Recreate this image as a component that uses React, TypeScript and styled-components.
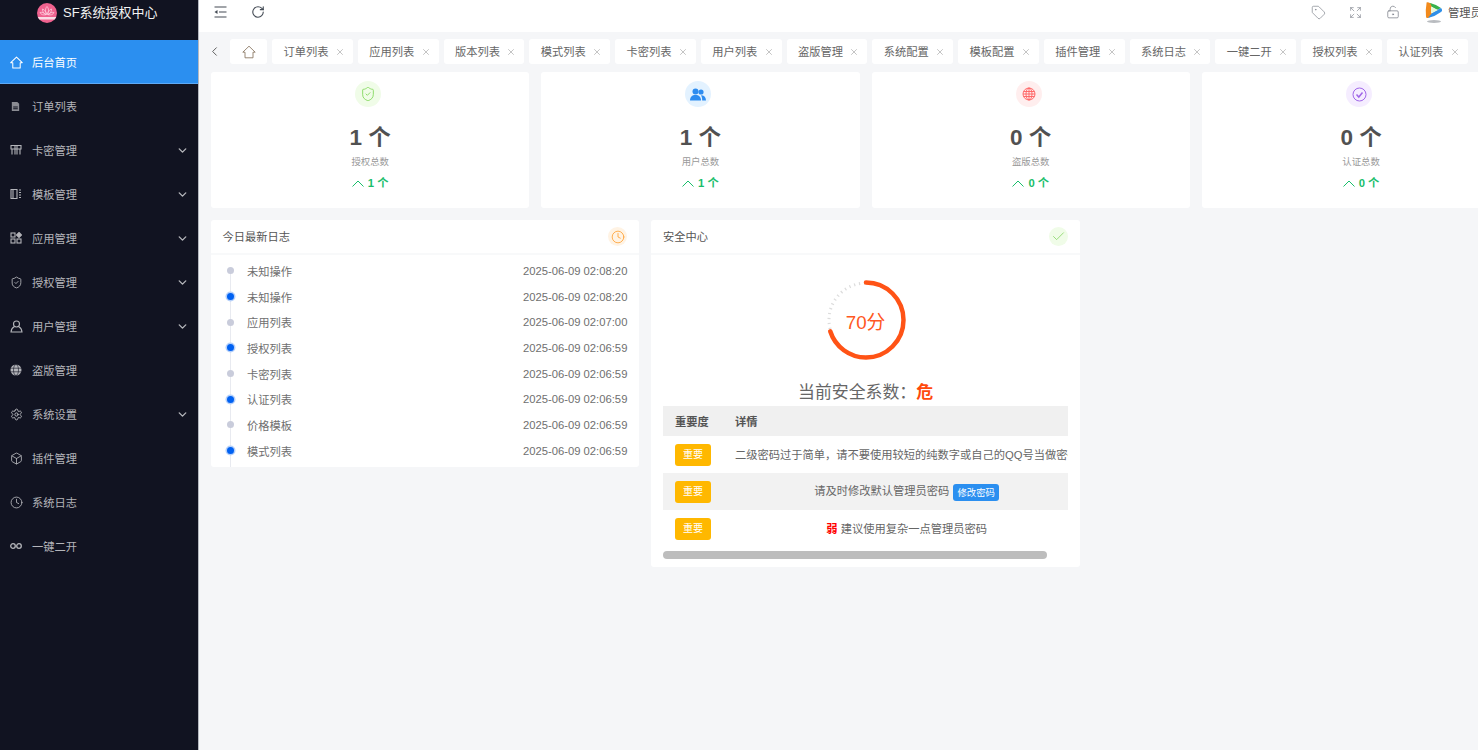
import React from 'react';
import styled, { createGlobalStyle } from 'styled-components';
import {
  Box, Check, ChevronDown, ChevronLeft, Clock, Expand, LockKeyholeOpen, RotateCw, Settings, ShieldCheck, Tag, X,
} from 'lucide-react';

const GlobalStyle = createGlobalStyle`
  html, body {
    margin: 0;
    height: 100%;
    overflow: hidden;
    background: #f5f6f8;
    font-family: "Liberation Sans", "Noto Sans CJK SC", sans-serif;
  }
`;

const HomeIcon = ({ size = 13, sw = 1.1 }: { size?: number; sw?: number }) => (
  <svg width={size} height={size} viewBox="0 0 14 14" fill="none" stroke="currentColor" strokeWidth={sw}>
    <path d="M.8 7.200 7 1.200l6.200 6H11v5.600H3V7.200z" strokeLinejoin="round" />
  </svg>
);
const OrderIcon = () => (
  <svg width="11" height="11" viewBox="0 0 12 12" fill="currentColor">
    <path d="M2 1h6l2 2v8H2z" opacity=".75" />
    <path d="M3.500 6h5v1h-5zM3.500 8h5v1h-5z" fill="#111321" />
  </svg>
);
const CardIcon = () => (
  <svg width="12" height="12" viewBox="0 0 12 12" fill="none" stroke="currentColor" strokeWidth="1.100">
    <path d="M1 1.500h10v3.500H1zM2 5v5.500M5 5v5.500M7 5v5.500M10 5v5.500M5 1.500V5M7 1.500V5" />
  </svg>
);
const TemplateIcon = () => (
  <svg width="12" height="12" viewBox="0 0 12 12" fill="none" stroke="currentColor" strokeWidth="1.100">
    <path d="M1 1.500h6v9H1zM3 1.500v9M9 2h2M9 4.500h2M9 7h2M9 9.500h2" />
  </svg>
);
const AppsIcon = () => (
  <svg width="12" height="12" viewBox="0 0 12 12" fill="none" stroke="currentColor" strokeWidth="1.100">
    <rect x="1" y="1" width="4" height="4" />
    <rect x="1" y="7" width="4" height="4" />
    <rect x="7" y="7" width="4" height="4" />
    <path d="M9 .5l2.500 2.500L9 5.500 6.500 3z" fill="currentColor" />
  </svg>
);
const PersonIcon = () => (
  <svg width="13" height="13" viewBox="0 0 13 13" fill="none" stroke="currentColor" strokeWidth="1.100">
    <circle cx="6.500" cy="4" r="3" />
    <path d="M4.500 6.500C2.500 7.500 1.200 9.500 1 12h11c-.2-2.500-1.500-4.500-3.500-5.500" />
  </svg>
);
const FilledGlobe = () => (
  <svg width="12" height="12" viewBox="0 0 12 12">
    <circle cx="6" cy="6" r="5.500" fill="currentColor" />
    <path d="M.5 4.200h11M.5 7.800h11" stroke="#111321" strokeWidth=".6" />
    <ellipse cx="6" cy="6" rx="2.500" ry="5.500" fill="none" stroke="#111321" strokeWidth=".6" />
  </svg>
);
const LoopIcon = () => (
  <svg width="12" height="8" viewBox="0 0 12 8" fill="none" stroke="currentColor" strokeWidth="1.300">
    <circle cx="3" cy="4" r="2.300" />
    <circle cx="9" cy="4" r="2.300" />
  </svg>
);
const MenuFold = () => (
  <svg width="13" height="12" viewBox="0 0 13 12" fill="none" stroke="currentColor" strokeWidth="1.200">
    <path d="M.5 1h12M.5 11h12M5 6h7.500" />
    <path d="M.5 6 3.500 4v4z" fill="currentColor" stroke="none" />
  </svg>
);
const ArrowUp = () => (
  <svg width="12" height="7" viewBox="0 0 12 7" fill="none" stroke="currentColor" strokeWidth="1">
    <path d="M.5 6.500 6 1l5.500 5.500" />
  </svg>
);
const ShieldBadge = () => <ShieldCheck size={16} strokeWidth={1.3} />;
const UsersBadge = () => (
  <svg width="16" height="13" viewBox="0 0 16 13" fill="currentColor">
    <circle cx="5.500" cy="3.500" r="3" />
    <path d="M0 12.500c0-3.500 2-5.500 5.500-5.500S11 9 11 12.500z" />
    <circle cx="11" cy="4" r="2.600" />
    <path d="M11.800 7.200c2.600.3 4 2 4.200 5.300h-3.800c0-2-.2-3.800-1.200-5z" />
  </svg>
);
const GlobeBadge = () => (
  <svg width="14" height="14" viewBox="0 0 14 14" fill="none" stroke="currentColor" strokeWidth=".9">
    <circle cx="7" cy="7" r="6" />
    <ellipse cx="7" cy="7" rx="3" ry="6" />
    <path d="M7 1v12M1.500 4.500h11M1 7h12M1.500 9.500h11" />
  </svg>
);
const CheckBadge = () => (
  <svg width="15" height="15" viewBox="0 0 15 15" fill="none" stroke="currentColor">
    <circle cx="7.500" cy="7.500" r="6.500" strokeWidth="1" />
    <path d="M4.500 7.500 6.800 10l3.700-4.500" strokeWidth="1.500" />
  </svg>
);
const HeadClock = () => <Clock size={14} strokeWidth={1.4} />;

const LotusLogo = () => (
  <svg width="20" height="20" viewBox="0 0 20 20">
    <circle cx="10" cy="10" r="10" fill="#f0628f" />
    <path d="M.8 14h18.400a10 10 0 0 1-1.500 2.500H2.300A10 10 0 0 1 .8 14z" fill="#fbdbe5" />
    <path d="M10 3.500c1.800 2 2.200 4.500 0 8-2.200-3.500-1.800-6 0-8zM5.500 6c2 .5 3.200 2.500 4 5.500-2.800-.5-4-2.500-4-5.500zM14.500 6c-2 .5-3.200 2.500-4 5.500 2.800-.5 4-2.500 4-5.500zM3 9.500c2-.5 4 .2 6 2.200-3 .6-5 0-6-2.200zM17 9.500c-2-.5-4 .2-6 2.200 3 .6 5 0 6-2.200z" fill="none" stroke="#ffd9e5" strokeWidth=".7" />
  </svg>
);

const PlayLogo = () => (
  <svg width="18" height="23" viewBox="0 0 18 23">
    <path d="M1.500 2.500Q1 1 3 1.200L7 3v12l-4 2q-2 .5-2-1.500Q.3 9 1.500 2.500z" fill="#f28a1c" />
    <path d="M3 1.200Q10 3 16 7l-4 2-5-3-2-4z" fill="#37b24d" />
    <path d="M17 9q.5 1-1 2-6 4.500-13 6l4-5 5-3 4-2q1 1 1 2z" fill="#2f8fe8" />
    <path d="M6 5.500 13 9l-7 3.500z" fill="#e9f7d8" />
    <ellipse cx="9" cy="20.500" rx="7" ry="1.500" fill="#b9bcc0" />
  </svg>
);

type MenuItem = { label: string; icon: React.ReactNode; arrow?: boolean; active?: boolean };

const menu: MenuItem[] = [
  { label: '后台首页', icon: <HomeIcon />, active: true },
  { label: '订单列表', icon: <OrderIcon /> },
  { label: '卡密管理', icon: <CardIcon />, arrow: true },
  { label: '模板管理', icon: <TemplateIcon />, arrow: true },
  { label: '应用管理', icon: <AppsIcon />, arrow: true },
  { label: '授权管理', icon: <ShieldCheck size={13} strokeWidth={1.6} />, arrow: true },
  { label: '用户管理', icon: <PersonIcon /> , arrow: true },
  { label: '盗版管理', icon: <FilledGlobe /> },
  { label: '系统设置', icon: <Settings size={13} strokeWidth={1.8} />, arrow: true },
  { label: '插件管理', icon: <Box size={13} strokeWidth={1.6} /> },
  { label: '系统日志', icon: <Clock size={13} strokeWidth={1.6} /> },
  { label: '一键二开', icon: <LoopIcon /> },
];

const tabs = ['订单列表', '应用列表', '版本列表', '模式列表', '卡密列表', '用户列表', '盗版管理', '系统配置', '模板配置', '插件管理', '系统日志', '一键二开', '授权列表', '认证列表'];

const stats = [
  { count: 1, label: '授权总数', color: '#7fd858', bg: '#f0fce8', icon: <ShieldBadge /> },
  { count: 1, label: '用户总数', color: '#2d8cf0', bg: '#e3f2ff', icon: <UsersBadge /> },
  { count: 0, label: '盗版总数', color: '#ff5f5f', bg: '#ffeeee', icon: <GlobeBadge /> },
  { count: 0, label: '认证总数', color: '#a066e8', bg: '#f5edff', icon: <CheckBadge /> },
];

const logs = [
  ['未知操作', '2025-06-09 02:08:20'],
  ['未知操作', '2025-06-09 02:08:20'],
  ['应用列表', '2025-06-09 02:07:00'],
  ['授权列表', '2025-06-09 02:06:59'],
  ['卡密列表', '2025-06-09 02:06:59'],
  ['认证列表', '2025-06-09 02:06:59'],
  ['价格模板', '2025-06-09 02:06:59'],
  ['模式列表', '2025-06-09 02:06:59'],
];

const Gauge = () => {
  const r = 37.5;
  const len = 2 * Math.PI * r;
  return (
    <GaugeWrap>
      <svg width="80" height="80" viewBox="0 0 80 80">
        <g transform="rotate(-90 40 40)" fill="none">
          <circle cx="40" cy="40" r={r - 0.5} stroke="#dcdcdc" strokeWidth="3" strokeDasharray="1.2 3.8" />
          <circle cx="40" cy="40" r={r} stroke="#ff5316" strokeWidth="4.500" strokeLinecap="round" strokeDasharray={`${len * 0.7} ${len}`} />
        </g>
      </svg>
      <GaugeText>70分</GaugeText>
    </GaugeWrap>
  );
};

export default function App() {
  return (
    <Page>
      <GlobalStyle />
      <Sidebar>
        <Brand>
          <LotusLogo />
          <BrandName>SF系统授权中心</BrandName>
        </Brand>
        {menu.map((m) => (
          <MenuRow key={m.label} $active={m.active}>
            <MenuIcon>{m.icon}</MenuIcon>
            <MenuLabel>{m.label}</MenuLabel>
            {m.arrow && <ChevronDown size={13} strokeWidth={2.6} />}
          </MenuRow>
        ))}
      </Sidebar>
      <Main>
        <TopBar>
          <MenuFold />
          <RefreshSlot><RotateCw size={14} strokeWidth={1.9} /></RefreshSlot>
          <TopRight>
            <TopIcon><Tag size={15} strokeWidth={1.1} /></TopIcon>
            <TopIcon><Expand size={13} strokeWidth={1.2} /></TopIcon>
            <TopIcon><LockKeyholeOpen size={14} strokeWidth={1.3} /></TopIcon>
            <UserBox>
              <PlayLogo />
              <UserName>管理员</UserName>
            </UserBox>
          </TopRight>
        </TopBar>
        <TabBar>
          <BackBtn><ChevronLeft size={15} strokeWidth={1.5} /></BackBtn>
          <HomeTab><HomeIcon size={14} sw={.9} /></HomeTab>
          {tabs.map((t) => (
            <TabItem key={t}>
              <TabText>{t}</TabText>
              <X size={10} strokeWidth={1.4} />
            </TabItem>
          ))}
        </TabBar>
        <Content>
          <StatGrid>
            {stats.map((s) => (
              <StatCard key={s.label}>
                <StatBadge $color={s.color} $bg={s.bg}>{s.icon}</StatBadge>
                <StatNumber>{s.count} 个</StatNumber>
                <StatLabel>{s.label}</StatLabel>
                <StatDelta>
                  <ArrowUp />
                  {s.count} 个
                </StatDelta>
              </StatCard>
            ))}
          </StatGrid>
          <PanelRow>
            <Panel>
              <PanelHead>
                <PanelTitle>今日最新日志</PanelTitle>
                <HeadBadge $color="#ff9f30" $bg="#fff3e4"><HeadClock /></HeadBadge>
              </PanelHead>
              <LogList>
                {logs.map(([name, time], i) => (
                  <LogRow key={i}>
                    <LogDot $on={i % 2 === 1} />
                    <LogName>{name}</LogName>
                    <LogTime>{time}</LogTime>
                  </LogRow>
                ))}
              </LogList>
            </Panel>
            <Panel>
              <PanelHead>
                <PanelTitle>安全中心</PanelTitle>
                <HeadBadge $color="#7ed35a" $bg="#f0fce8"><Check size={15} strokeWidth={1.2} /></HeadBadge>
              </PanelHead>
              <SecurityBody>
                <Gauge />
                <Level>当前安全系数：<LevelMark>危</LevelMark></Level>
                <TableScroll>
                  <Table>
                    <thead>
                      <tr>
                        <Th $w={60}>重要度</Th>
                        <Th>详情</Th>
                      </tr>
                    </thead>
                    <tbody>
                      <Tr>
                        <Td><ImportantTag>重要</ImportantTag></Td>
                        <Td $lift>二级密码过于简单，请不要使用较短的纯数字或自己的QQ号当做密码</Td>
                      </Tr>
                      <Tr $odd>
                        <Td><ImportantTag>重要</ImportantTag></Td>
                        <Td $center>请及时修改默认管理员密码 <EditBtn>修改密码</EditBtn></Td>
                      </Tr>
                      <Tr>
                        <Td><ImportantTag>重要</ImportantTag></Td>
                        <Td $center $lift><Weak>弱</Weak> 建议使用复杂一点管理员密码</Td>
                      </Tr>
                    </tbody>
                  </Table>
                </TableScroll>
                <ScrollThumb />
              </SecurityBody>
            </Panel>
          </PanelRow>
        </Content>
      </Main>
    </Page>
  );
}

const Page = styled.div`
  display: flex;
  width: 1478px;
  height: 750px;
  overflow: hidden;
`;
const Sidebar = styled.aside`
  flex: 0 0 199px;
  background: #111321;
  border-right: 1px solid #b5b8c0;
  box-sizing: border-box;
`;
const Brand = styled.div`
  height: 40px;
  box-sizing: border-box;
  padding: 3px 0 0 37px;
  display: flex;
  align-items: flex-start;
  gap: 6px;
`;
const BrandName = styled.span`
  color: #f2f2f2;
  font-size: 13px;
  line-height: 20px;
  white-space: nowrap;
`;
const MenuRow = styled.div<{ $active?: boolean }>`
  height: 44px;
  box-sizing: border-box;
  padding: 0 9px 0 10px;
  display: flex;
  align-items: center;
  font-size: 11.25px;
  color: ${(p) => (p.$active ? '#fff' : '#b4b5ba')};
  background: ${(p) => (p.$active ? '#2b8ff0' : 'transparent')};
  box-shadow: ${(p) => (p.$active ? 'inset 0 -1px 0 #5eaaf6' : 'none')};
`;
const MenuIcon = styled.span`
  width: 22px;
  display: flex;
  align-items: center;
`;
const MenuLabel = styled.span`
  flex: 1;
  padding-bottom: 1px;
`;
const Main = styled.main`
  flex: 1;
  min-width: 0;
  display: flex;
  flex-direction: column;
`;
const TopBar = styled.header`
  height: 32px;
  flex: none;
  background: #fff;
  display: flex;
  align-items: center;
  padding: 0 0 8px 15px;
  box-sizing: border-box;
  color: #444b55;
`;
const RefreshSlot = styled.span`
  display: flex;
  margin-left: 24px;
`;
const TopRight = styled.div`
  margin-left: auto;
  display: flex;
  align-items: center;
  color: #7d828b;
`;
const TopIcon = styled.span`
  width: 37px;
  display: flex;
  justify-content: center;
`;
const UserBox = styled.div`
  display: flex;
  align-items: center;
  width: 53px;
  margin-left: 14px;
  gap: 5px;
  overflow: hidden;
  svg {
    flex: none;
  }
`;
const UserName = styled.span`
  font-size: 11.25px;
  color: #555;
  white-space: nowrap;
`;
const TabBar = styled.nav`
  height: 40px;
  flex: none;
  padding-top: 7px;
  box-sizing: border-box;
  display: flex;
  align-items: flex-start;
  gap: 5px;
  overflow: hidden;
`;
const BackBtn = styled.span`
  flex: none;
  width: 26px;
  height: 25px;
  padding-left: 8px;
  box-sizing: border-box;
  display: flex;
  align-items: center;
  color: #555;
`;
const HomeTab = styled.span`
  width: 37px;
  height: 25px;
  background: #fff;
  border-radius: 3px;
  display: flex;
  align-items: center;
  justify-content: center;
  color: #8d7a66;
  flex: none;
`;
const TabItem = styled.span`
  flex: none;
  width: 80.75px;
  height: 25px;
  box-sizing: border-box;
  padding: 0 8px 0 11.5px;
  background: #fff;
  border-radius: 3px;
  display: flex;
  align-items: center;
  justify-content: space-between;
  font-size: 11.25px;
  color: #666;
  svg {
    color: #999;
  }
`;
const TabText = styled.span`
  padding-bottom: 2px;
`;
const Content = styled.div`
  flex: 1;
  padding-left: 12px;
  overflow: hidden;
`;
const StatGrid = styled.section`
  display: grid;
  grid-template-columns: repeat(4, 318.3px);
  gap: 12px;
  width: 1310px;
`;
const StatCard = styled.div`
  height: 136px;
  background: #fff;
  border-radius: 3px;
  padding-top: 9px;
  box-sizing: border-box;
  display: flex;
  flex-direction: column;
  align-items: center;
`;
const StatBadge = styled.span<{ $color: string; $bg: string }>`
  width: 26px;
  height: 26px;
  border-radius: 50%;
  margin-left: -4px;
  color: ${(p) => p.$color};
  background: ${(p) => p.$bg};
  display: flex;
  align-items: center;
  justify-content: center;
`;
const StatNumber = styled.div`
  margin-top: 17px;
  font-size: 22.5px;
  line-height: 27px;
  font-weight: 700;
  color: #515151;
`;
const StatLabel = styled.div`
  margin-top: 4px;
  font-size: 9.4px;
  line-height: 14px;
  color: #999;
`;
const StatDelta = styled.div`
  margin-top: 6px;
  display: flex;
  align-items: center;
  gap: 4px;
  font-size: 11.25px;
  line-height: 16px;
  font-weight: 700;
  color: #19be6b;
`;
const PanelRow = styled.section`
  display: flex;
  align-items: flex-start;
  gap: 12px;
  margin-top: 12px;
`;
const Panel = styled.div`
  flex: 0 0 428.4px;
  width: 428.4px;
  background: #fff;
  border-radius: 3px;
`;
const PanelHead = styled.div`
  height: 35px;
  box-sizing: border-box;
  padding: 0 12px 0 11.5px;
  border-bottom: 2px solid #f8f9fa;
  display: flex;
  align-items: center;
  justify-content: space-between;
`;
const PanelTitle = styled.span`
  font-size: 11.25px;
  color: #555;
  padding-bottom: 1px;
`;
const HeadBadge = styled.span<{ $color: string; $bg: string }>`
  width: 19px;
  height: 19px;
  border-radius: 50%;
  color: ${(p) => p.$color};
  background: ${(p) => p.$bg};
  display: flex;
  align-items: center;
  justify-content: center;
`;
const LogList = styled.div`
  position: relative;
  padding: 3px 12px 3px 16px;
  &::before {
    content: '';
    position: absolute;
    left: 19px;
    top: 16px;
    bottom: 0;
    width: 1px;
    background: #e8eaf0;
  }
`;
const LogRow = styled.div`
  height: 25.7px;
  display: flex;
  align-items: center;
  font-size: 11.25px;
  color: #6f6f6f;
`;
const LogDot = styled.span<{ $on: boolean }>`
  position: relative;
  z-index: 1;
  width: 7px;
  height: 7px;
  margin-right: 13px;
  border-radius: 50%;
  background: ${(p) => (p.$on ? '#0061f2' : '#c9ccdb')};
  box-shadow: ${(p) => (p.$on ? '0 0 0 1.5px #b5d0fa' : 'none')};
`;
const LogName = styled.span`
  flex: 1;
`;
const LogTime = styled.span`
  color: #6f6f6f;
`;
const SecurityBody = styled.div`
  padding: 25px 12px 8px;
  display: flex;
  flex-direction: column;
  align-items: center;
`;
const GaugeWrap = styled.div`
  position: relative;
  width: 80px;
  height: 80px;
`;
const GaugeText = styled.span`
  position: absolute;
  inset: 0;
  display: flex;
  align-items: center;
  justify-content: center;
  font-size: 18.75px;
  color: #ff5722;
`;
const Level = styled.div`
  margin-top: 20px;
  font-size: 16.9px;
  line-height: 26px;
  color: #666;
`;
const LevelMark = styled.b`
  color: #ff4a0d;
`;
const TableScroll = styled.div`
  width: 405px;
  overflow: hidden;
`;
const ScrollThumb = styled.div`
  align-self: flex-start;
  width: 384px;
  height: 8px;
  margin-top: 4px;
  border-radius: 4px;
  background: #bdbdbd;
`;
const Table = styled.table`
  width: 427px;
  table-layout: fixed;
  border-collapse: collapse;
`;
const Th = styled.th<{ $w?: number }>`
  width: ${(p) => (p.$w ? `${p.$w}px` : 'auto')};
  height: 30px;
  padding: 0 12px;
  box-sizing: border-box;
  background: #f0f0f0;
  text-align: left;
  font-size: 11.25px;
  font-weight: 700;
  color: #555;
`;
const Tr = styled.tr<{ $odd?: boolean }>`
  background: ${(p) => (p.$odd ? '#f2f2f2' : '#fff')};
`;
const Td = styled.td<{ $center?: boolean; $lift?: boolean }>`
  height: 37px;
  padding: 0 12px ${(p) => (p.$lift ? '2px' : '0')};
  box-sizing: border-box;
  font-size: 11.25px;
  color: #666;
  white-space: nowrap;
  text-align: ${(p) => (p.$center ? 'center' : 'left')};
`;
const ImportantTag = styled.span`
  display: block;
  width: 36px;
  height: 22px;
  line-height: 22px;
  text-align: center;
  border-radius: 3px;
  background: #ffb800;
  color: #fff;
  font-size: 10px;
`;
const EditBtn = styled.span`
  display: inline-block;
  height: 17px;
  line-height: 17px;
  padding: 0 4px;
  margin-left: 1px;
  border-radius: 3px;
  background: #2b8ff0;
  color: #fff;
  font-size: 9.4px;
  vertical-align: middle;
`;
const Weak = styled.b`
  color: #ff0000;
`;
